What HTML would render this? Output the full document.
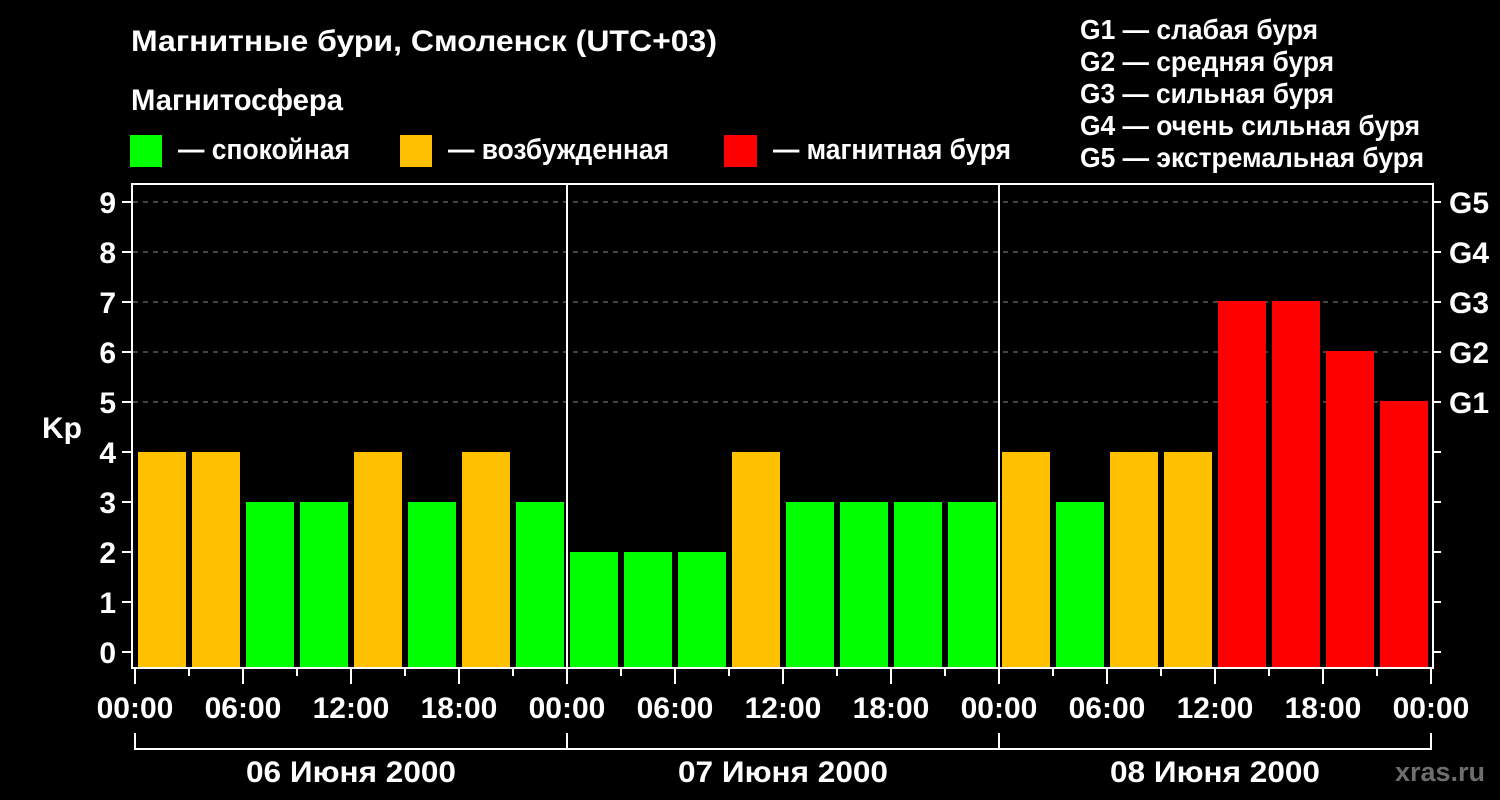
<!DOCTYPE html>
<html><head><meta charset="utf-8"><style>
html,body{margin:0;padding:0;background:#000;}
svg{display:block;}
text{font-family:"Liberation Sans",Arial,sans-serif;font-weight:bold;fill:#fff;}
</style></head><body>
<svg width="1500" height="800" viewBox="0 0 1500 800" xmlns="http://www.w3.org/2000/svg">
<rect width="1500" height="800" fill="#000"/>
<text x="131" y="51" font-size="30" textLength="586" lengthAdjust="spacingAndGlyphs">Магнитные бури, Смоленск (UTC+03)</text>
<text x="131" y="110" font-size="30" textLength="212" lengthAdjust="spacingAndGlyphs">Магнитосфера</text>
<rect x="130" y="135" width="32" height="32" fill="#00ff00"/>
<text x="178" y="159" font-size="29" textLength="172" lengthAdjust="spacingAndGlyphs">— спокойная</text>
<rect x="400" y="135" width="32" height="32" fill="#ffc000"/>
<text x="448" y="159" font-size="29" textLength="221" lengthAdjust="spacingAndGlyphs">— возбужденная</text>
<rect x="724" y="135" width="33" height="32" fill="#ff0000"/>
<text x="773" y="159" font-size="29" textLength="238" lengthAdjust="spacingAndGlyphs">— магнитная буря</text>
<g font-size="28">
<text x="1080" y="39" textLength="238" lengthAdjust="spacingAndGlyphs">G1 — слабая буря</text>
<text x="1080" y="71" textLength="254" lengthAdjust="spacingAndGlyphs">G2 — средняя буря</text>
<text x="1080" y="103" textLength="254" lengthAdjust="spacingAndGlyphs">G3 — сильная буря</text>
<text x="1080" y="135" textLength="340" lengthAdjust="spacingAndGlyphs">G4 — очень сильная буря</text>
<text x="1080" y="167" textLength="344" lengthAdjust="spacingAndGlyphs">G5 — экстремальная буря</text>
</g>
<g stroke="#888" stroke-width="1" stroke-dasharray="5,5">
<line x1="133" y1="202" x2="1432" y2="202"/>
<line x1="133" y1="252" x2="1432" y2="252"/>
<line x1="133" y1="302" x2="1432" y2="302"/>
<line x1="133" y1="352" x2="1432" y2="352"/>
<line x1="133" y1="402" x2="1432" y2="402"/>
</g>
<g>
<rect x="138" y="452" width="48" height="216" fill="#ffc000"/>
<rect x="192" y="452" width="48" height="216" fill="#ffc000"/>
<rect x="246" y="502" width="48" height="166" fill="#00ff00"/>
<rect x="300" y="502" width="48" height="166" fill="#00ff00"/>
<rect x="354" y="452" width="48" height="216" fill="#ffc000"/>
<rect x="408" y="502" width="48" height="166" fill="#00ff00"/>
<rect x="462" y="452" width="48" height="216" fill="#ffc000"/>
<rect x="516" y="502" width="48" height="166" fill="#00ff00"/>
<rect x="570" y="552" width="48" height="116" fill="#00ff00"/>
<rect x="624" y="552" width="48" height="116" fill="#00ff00"/>
<rect x="678" y="552" width="48" height="116" fill="#00ff00"/>
<rect x="732" y="452" width="48" height="216" fill="#ffc000"/>
<rect x="786" y="502" width="48" height="166" fill="#00ff00"/>
<rect x="840" y="502" width="48" height="166" fill="#00ff00"/>
<rect x="894" y="502" width="48" height="166" fill="#00ff00"/>
<rect x="948" y="502" width="48" height="166" fill="#00ff00"/>
<rect x="1002" y="452" width="48" height="216" fill="#ffc000"/>
<rect x="1056" y="502" width="48" height="166" fill="#00ff00"/>
<rect x="1110" y="452" width="48" height="216" fill="#ffc000"/>
<rect x="1164" y="452" width="48" height="216" fill="#ffc000"/>
<rect x="1218" y="301" width="48" height="367" fill="#ff0000"/>
<rect x="1272" y="301" width="48" height="367" fill="#ff0000"/>
<rect x="1326" y="351" width="48" height="317" fill="#ff0000"/>
<rect x="1380" y="401" width="48" height="267" fill="#ff0000"/>
</g>
<g stroke="#fff" stroke-width="2" fill="none">
<rect x="132" y="184" width="1301" height="484"/>
<line x1="567" y1="184" x2="567" y2="668"/>
<line x1="999" y1="184" x2="999" y2="668"/>
<path d="M122 202h10M122 252h10M122 302h10M122 352h10M122 402h10M122 452h10M122 502h10M122 552h10M122 602h10M122 652h10"/>
<path d="M1433 202h8M1433 252h8M1433 302h8M1433 352h8M1433 402h8M1433 452h8M1433 502h8M1433 552h8M1433 602h8M1433 652h8"/>
<path d="M135 668v16M243 668v16M351 668v16M459 668v16M567 668v16M675 668v16M783 668v16M891 668v16M999 668v16M1107 668v16M1215 668v16M1323 668v16M1431 668v16"/>
<path d="M189 668v8M297 668v8M405 668v8M513 668v8M621 668v8M729 668v8M837 668v8M945 668v8M1053 668v8M1161 668v8M1269 668v8M1377 668v8"/>
<path d="M135 733v16H1431v-16M567 733v16M999 733v16"/>
</g>
<g font-size="30" text-anchor="end">
<text x="116" y="213">9</text><text x="116" y="263">8</text><text x="116" y="313">7</text>
<text x="116" y="363">6</text><text x="116" y="413">5</text><text x="116" y="463">4</text>
<text x="116" y="513">3</text><text x="116" y="563">2</text><text x="116" y="613">1</text>
<text x="116" y="663">0</text>
</g>
<text x="42" y="438" font-size="30">Kp</text>
<g font-size="30">
<text x="1449" y="213">G5</text><text x="1449" y="263">G4</text><text x="1449" y="313">G3</text>
<text x="1449" y="363">G2</text><text x="1449" y="413">G1</text>
</g>
<g font-size="30" text-anchor="middle">
<text x="135" y="718">00:00</text><text x="243" y="718">06:00</text><text x="351" y="718">12:00</text>
<text x="459" y="718">18:00</text><text x="567" y="718">00:00</text><text x="675" y="718">06:00</text>
<text x="783" y="718">12:00</text><text x="891" y="718">18:00</text><text x="999" y="718">00:00</text>
<text x="1107" y="718">06:00</text><text x="1215" y="718">12:00</text><text x="1323" y="718">18:00</text>
<text x="1431" y="718">00:00</text>
<text x="351" y="782" textLength="210" lengthAdjust="spacingAndGlyphs">06 Июня 2000</text>
<text x="783" y="782" textLength="210" lengthAdjust="spacingAndGlyphs">07 Июня 2000</text>
<text x="1215" y="782" textLength="210" lengthAdjust="spacingAndGlyphs">08 Июня 2000</text>
</g>
<text x="1395" y="781" font-size="27" style="fill:#6e6e6e" textLength="90" lengthAdjust="spacingAndGlyphs">xras.ru</text>
</svg>
</body></html>
